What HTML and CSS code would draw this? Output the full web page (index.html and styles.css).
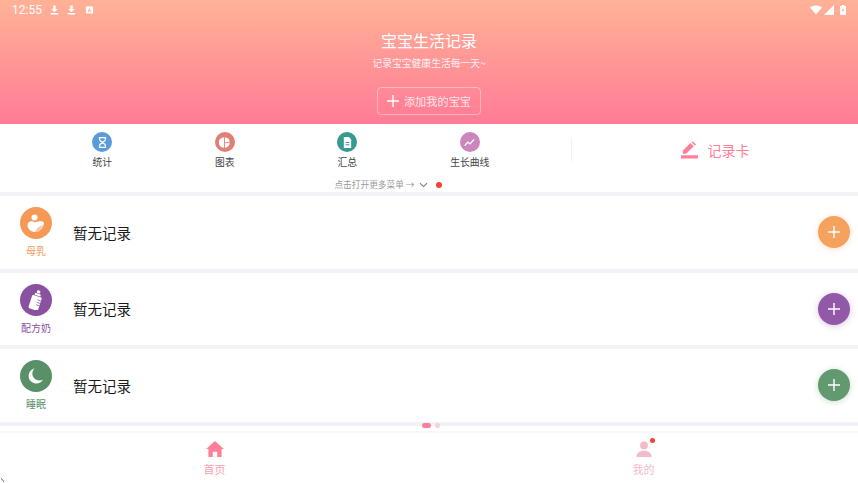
FILE: index.html
```html
<!DOCTYPE html>
<html lang="zh-CN">
<head>
  <meta charset="UTF-8">
  <meta name="viewport" content="width=device-width, initial-scale=1.0">
  <title>宝宝生活记录</title>
  <link rel="stylesheet" href="styles.css">
</head>
<body>
  <header class="hero">
    <!-- Status bar -->
    <div class="status-bar">
      <div class="status-left">
        <span class="clock">12:55</span>
        <svg class="status-icon" viewBox="0 0 10 10"><path d="M3.6 0h2.8v4h2.2L5 7.4 1.4 4h2.2zM.8 8.4h8.4V10H.8z"/></svg>
        <svg class="status-icon" viewBox="0 0 10 10"><path d="M3.6 0h2.8v4h2.2L5 7.4 1.4 4h2.2zM.8 8.4h8.4V10H.8z"/></svg>
        <svg class="status-icon" viewBox="0 0 10 10"><path fill-rule="evenodd" d="M1 1h8v8H1zM5 2.4 3 7.4h1.1l.3-.9h1.2l.3.9H7zM4.7 5.6 5 4.6l.3 1z"/></svg>
      </div>
      <div class="status-right">
        <svg class="wifi" viewBox="0 0 13 10"><path d="M0 2.4C3.6-.8 9.4-.8 13 2.4L6.5 10z"/></svg>
        <svg class="signal" viewBox="0 0 10 10"><path d="M10 0v10H0z"/></svg>
        <svg class="battery" viewBox="0 0 6 10"><path fill-rule="evenodd" d="M1.8 0h2.4v1H6v9H0V1h1.8zM3.4 2.5 1.6 5.8h1.2l-.3 2 1.9-3.300H3.200z"/></svg>
      </div>
    </div>
    <h1 class="hero-title">宝宝生活记录</h1>
    <p class="hero-sub">记录宝宝健康生活每一天~</p>
    <button class="add-baby">
      <svg viewBox="0 0 12 12"><path d="M5.300 0h1.400v5.300H12v1.400H6.700V12H5.300V6.700H0V5.300h5.300z"/></svg>
      添加我的宝宝
    </button>
  </header>

  <!-- Quick menu -->
  <section class="menu">
    <div class="menu-main">
      <div class="menu-items">
        <div class="menu-item">
          <span class="menu-icon blue">
            <svg viewBox="0 0 12 12"><path fill="none" stroke="#fff" stroke-width="1.300" d="M2 .7h8M2 11.300h8M3 1v2.500c0 1 3 1.500 3 2.500S3 7.500 3 8.500V11M9 1v2.500c0 1-3 1.500-3 2.500s3 1.500 3 2.500V11"/></svg>
          </span>
          <span class="menu-label">统计</span>
        </div>
        <div class="menu-item">
          <span class="menu-icon red">
            <svg viewBox="0 0 12 12"><path fill="#fff" d="M5.400.3v11.400a5.700 5.700 0 0 1 0-11.400zM6.400.3a5.700 5.700 0 0 1 5.300 5.300H6.400zM6.400 6.600h5.300a5.700 5.700 0 0 1-5.300 5.100z"/></svg>
          </span>
          <span class="menu-label">图表</span>
        </div>
        <div class="menu-item">
          <span class="menu-icon teal">
            <svg viewBox="0 0 12 12"><path fill="#fff" fill-rule="evenodd" d="M2 0h5.500L10 2.600V12H2zM4 5.500v1h4v-1zM4 8v1h4V8z"/></svg>
          </span>
          <span class="menu-label">汇总</span>
        </div>
        <div class="menu-item">
          <span class="menu-icon pink">
            <svg viewBox="0 0 12 12"><path fill="none" stroke="#fff" stroke-width="1.400" d="M.8 9.500 4.200 5.500 6.500 7.500 11 2.800"/></svg>
          </span>
          <span class="menu-label">生长曲线</span>
        </div>
      </div>
      <div class="menu-more">
        <span>点击打开更多菜单 →</span>
        <svg class="chevron" viewBox="0 0 10 6"><path fill="none" stroke="#777" stroke-width="1.200" d="M1 1l4 3.800L9 1"/></svg>
        <i class="red-dot"></i>
      </div>
    </div>
    <div class="record-card">
      <svg viewBox="0 0 18 18"><path fill="#ff7f99" d="M0 14.500h18V18H0zM2 13V9.500L10 1.500l3.500 3.500L5.500 13zM11 .8 12.500 0 16 3.200 14.500 4.200z"/></svg>
      <span>记录卡</span>
    </div>
  </section>

  <!-- Records -->
  <main class="records">
    <div class="record">
      <div class="kind orange">
        <span class="kind-icon">
          <svg viewBox="0 0 18 18"><circle cx="7.500" cy="3.500" r="3" fill="#fff"/><path fill="#fff" d="M.5 11C.5 8 3.500 6.500 6 7.500c1 .5 2 1 3 .5 3-1.500 8-1 8 1 0 4-4 9-9 9-4 0-7.500-3-7.500-7z"/><path fill="#f9c9a0" d="M8 18c4 0 7-3 8.500-7-2.500 1-6.500 2-8.500 7z"/></svg>
        </span>
        <span class="kind-label">母乳</span>
      </div>
      <div class="record-text">暂无记录</div>
      <button class="plus orange"><svg viewBox="0 0 12 12"><path d="M5.300 0h1.400v5.300H12v1.400H6.700V12H5.300V6.700H0V5.300h5.300z"/></svg></button>
    </div>
    <div class="record">
      <div class="kind purple">
        <span class="kind-icon">
          <svg viewBox="0 0 16 20"><g transform="rotate(18 8 10)"><rect x="6.300" y="0" width="3.400" height="3" rx="1.200" fill="#fff"/><rect x="5" y="3.400" width="6" height="2" fill="#fff"/><path fill="#fff" d="M4 6h8a1 1 0 0 1 1 1v11a2 2 0 0 1-2 2H5a2 2 0 0 1-2-2V7a1 1 0 0 1 1-1z"/><path stroke="#8a51a0" stroke-width=".7" d="M9.500 9.500H13M9.500 12H13M9.500 14.500H13"/></g></svg>
        </span>
        <span class="kind-label">配方奶</span>
      </div>
      <div class="record-text">暂无记录</div>
      <button class="plus purple"><svg viewBox="0 0 12 12"><path d="M5.300 0h1.400v5.300H12v1.400H6.700V12H5.300V6.700H0V5.300h5.300z"/></svg></button>
    </div>
    <div class="record">
      <div class="kind green">
        <span class="kind-icon">
          <svg viewBox="0 0 16 16"><path fill="#fff" d="M6.500.5C4 3 3.600 7 5.800 9.800c2.200 2.700 5.800 3.300 9.200 1.900-1.600 2.700-4.500 4-7.500 3.700C3.400 15 .3 11.500.6 7.500.9 4 3.300 1.200 6.500.5z"/></svg>
        </span>
        <span class="kind-label">睡眠</span>
      </div>
      <div class="record-text">暂无记录</div>
      <button class="plus green"><svg viewBox="0 0 12 12"><path d="M5.300 0h1.400v5.300H12v1.400H6.700V12H5.300V6.700H0V5.300h5.300z"/></svg></button>
    </div>
  </main>

  <div class="pager">
    <i class="pager-on"></i>
    <i class="pager-off"></i>
  </div>

  <!-- Tab bar -->
  <nav class="tabbar">
    <div class="tab">
      <svg class="tab-icon home" viewBox="0 0 20 18"><path fill="#ff7f99" d="M10 0l10 9h-2.600v9h-4.900v-6h-5v6H2.600V9H0z"/></svg>
      <span class="tab-label">首页</span>
    </div>
    <div class="tab tab-off">
      <span class="tab-icon-wrap">
        <svg class="tab-icon" viewBox="0 0 18 18"><circle cx="9" cy="5" r="4.400" fill="#f3bccb"/><path fill="#f3bccb" d="M.5 18c0-4.500 3.500-7 8.500-7s8.500 2.500 8.500 7z"/></svg>
        <i class="tab-badge"></i>
      </span>
      <span class="tab-label">我的</span>
    </div>
  </nav>

  <svg class="corner-mark" viewBox="0 0 4 5"><path stroke="#222" stroke-width="1" d="M0 0l4 5"/></svg>
</body>
</html>
```

FILE: styles.css
```css
/* General Styles */
html, body {
  margin: 0;
  height: 100%;
}

body {
  position: relative;
  width: 858px;
  height: 483px;
  overflow: hidden;
  background: #fff;
  color: #333;
  font-family: "Noto Sans CJK SC", "Liberation Sans", sans-serif;
}

/* Header */
.hero {
  height: 124px;
  display: flex;
  flex-direction: column;
  align-items: center;
  background: linear-gradient(180deg, #ffb297 0%, #ff7b96 100%);
  color: #fff;
}

.status-bar {
  align-self: stretch;
  height: 20px;
  padding: 0 12px;
  display: flex;
  align-items: center;
  justify-content: space-between;
}

.status-left,
.status-right {
  display: flex;
  align-items: center;
}

.clock {
  font-family: Roboto, sans-serif;
  font-size: 12px;
  margin-right: 8px;
}

.status-icon {
  width: 9px;
  height: 10px;
  margin-right: 8.5px;
  fill: #fff;
}

.wifi {
  width: 12px;
  height: 10px;
  fill: #fff;
  margin-right: 2px;
}

.signal {
  width: 10px;
  height: 10px;
  fill: #fff;
  margin-right: 6px;
}

.battery {
  width: 6px;
  height: 10px;
  fill: #fff;
}

.hero-title {
  margin: 9px 0 0;
  font-size: 16px;
  font-weight: 400;
  line-height: 22px;
}

.hero-sub {
  margin: 5px 0 0;
  font-size: 9.8px;
  line-height: 14px;
  opacity: .85;
}

.add-baby {
  margin-top: 17px;
  width: 104px;
  height: 28px;
  padding: 0;
  display: flex;
  align-items: center;
  justify-content: center;
  gap: 5px;
  background: transparent;
  border: 1px solid rgba(255, 255, 255, .4);
  border-radius: 4px;
  color: rgba(255, 255, 255, .8);
  font-family: inherit;
  font-size: 11.2px;
}

.add-baby svg {
  width: 12px;
  height: 12px;
  fill: #fff;
}

/* Quick menu */
.menu {
  height: 68px;
  display: flex;
  background: #fff;
}

.menu-main {
  width: 572px;
  display: flex;
  flex-direction: column;
}

.menu-items {
  height: 53px;
  padding: 0 41px;
  display: grid;
  grid-template-columns: repeat(4, 1fr);
  border-bottom: 1px solid #fdfdfd;
  box-sizing: border-box;
}

.menu-item {
  display: flex;
  flex-direction: column;
  align-items: center;
  padding-top: 8px;
}

.menu-icon {
  width: 20px;
  height: 20px;
  border-radius: 50%;
  display: flex;
  align-items: center;
  justify-content: center;
}

.menu-icon svg {
  width: 11px;
  height: 11px;
}

.menu-icon.blue { background: #5b9bd9; }
.menu-icon.red { background: #e07f75; }
.menu-icon.teal { background: #379a92; }
.menu-icon.pink { background: #cb86bd; }

.menu-label {
  margin-top: 3px;
  font-size: 9.8px;
  line-height: 14px;
  color: #444;
}

.menu-more {
  height: 15px;
  display: flex;
  align-items: center;
  justify-content: center;
  padding-left: 204px;
  font-size: 8.7px;
  color: #999;
}

.chevron {
  width: 9px;
  height: 6px;
  margin-left: 4px;
}

.red-dot {
  width: 6px;
  height: 6px;
  margin-left: 8px;
  border-radius: 50%;
  background: #f8402f;
}

.record-card {
  flex: 1;
  height: 52px;
  display: flex;
  align-items: center;
  justify-content: center;
  gap: 10px;
  color: #ff7f99;
  font-size: 14px;
  position: relative;
}

.record-card::before {
  content: "";
  position: absolute;
  left: -1px;
  top: 14px;
  height: 24px;
  border-left: 1px solid #f2f2f2;
}

.record-card svg {
  width: 17px;
  height: 18px;
}

/* Records */
.records {
  background: #f2f2f6;
  padding: 4px 0;
  display: flex;
  flex-direction: column;
  gap: 4px;
}

.record {
  height: 72.5px;
  padding: 0 8px 0 16px;
  display: flex;
  align-items: center;
  background: #fff;
}

.kind {
  width: 40px;
  display: flex;
  flex-direction: column;
  align-items: center;
  padding-top: 1px;
}

.kind-icon {
  width: 32px;
  height: 32px;
  border-radius: 50%;
  display: flex;
  align-items: center;
  justify-content: center;
}

.kind-icon svg {
  width: 16px;
  height: 16px;
}

.kind.orange .kind-icon svg {
  width: 18px;
  height: 18px;
}

.kind.purple .kind-icon svg {
  height: 20px;
}

.kind.orange .kind-icon { background: #f49a56; }
.kind.purple .kind-icon { background: #8a51a0; }
.kind.green .kind-icon { background: #5a9068; }

.kind-label {
  margin-top: 5px;
  font-size: 10px;
  line-height: 14px;
}

.kind.orange .kind-label { color: #f49a56; }
.kind.purple .kind-label { color: #8a51a0; }
.kind.green .kind-label { color: #5a9068; }

.record-text {
  flex: 1;
  margin-left: 17px;
  font-size: 14.5px;
  color: #1a1a1a;
}

.plus {
  width: 32px;
  height: 32px;
  padding: 0;
  border: none;
  border-radius: 50%;
  display: flex;
  align-items: center;
  justify-content: center;
}

.plus svg {
  width: 12px;
  height: 12px;
  fill: #fff;
}

.plus.orange { background: #f5a25f; box-shadow: 0 1px 6px rgba(245, 162, 95, .35); }
.plus.purple { background: #9159a8; box-shadow: 0 1px 6px rgba(145, 89, 168, .35); }
.plus.green { background: #63996f; box-shadow: 0 1px 6px rgba(99, 153, 111, .35); }

/* Pager dots lie over the grey divider */
.pager {
  position: absolute;
  left: 422px;
  top: 423px;
  display: flex;
  align-items: center;
  gap: 4px;
}

.pager-on {
  width: 9px;
  height: 5px;
  border-radius: 3px;
  background: #ff7f99;
}

.pager-off {
  width: 5px;
  height: 5px;
  border-radius: 3px;
  background: #fbd0da;
}

/* Tab bar */
.tabbar {
  margin-top: 5.5px;
  height: 52px;
  border-top: 2px solid #f8f8f8;
  display: grid;
  grid-template-columns: 1fr 1fr;
}

.tab {
  display: flex;
  flex-direction: column;
  align-items: center;
  padding-top: 8px;
  color: #ffa0b4;
}

.tab-off {
  color: #f3bccb;
}

.tab-icon-wrap {
  position: relative;
  height: 16px;
}

.tab-icon {
  display: block;
  width: 16px;
  height: 16px;
}

.tab-icon.home {
  width: 18px;
}

.tab-badge {
  position: absolute;
  right: -3px;
  top: -3px;
  width: 5px;
  height: 5px;
  border-radius: 50%;
  background: #f8402f;
}

.tab-label {
  margin-top: 4px;
  font-size: 11px;
  line-height: 16px;
}

/* Small dark mark in the window's bottom-left corner */
.corner-mark {
  position: absolute;
  left: 1px;
  bottom: 1px;
  width: 3px;
  height: 4px;
}
```
